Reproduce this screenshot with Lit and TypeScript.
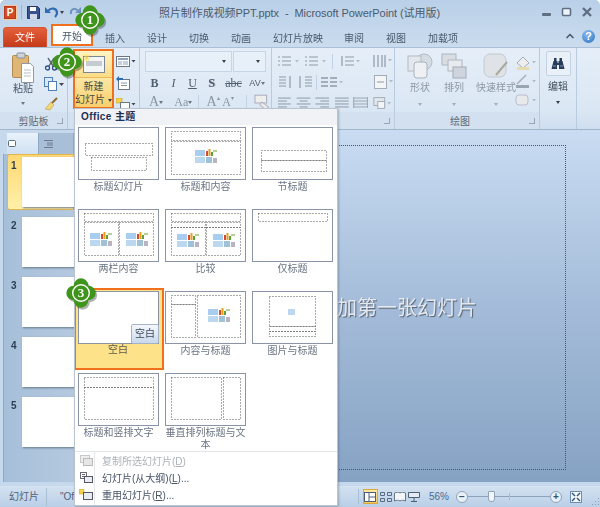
import { LitElement, html, css, svg } from 'lit'
import { customElement } from 'lit/decorators.js'

type Box = [number, number, number, number]

interface Layout {
  label: string
  boxes: Box[]
  icons?: [number, number][]
  selected?: boolean
}

// dashed placeholders inside each 81x53 thumbnail: x, y, w, h
const layouts: Layout[] = [
  { label: '标题幻灯片', boxes: [[7, 16, 67, 12], [13, 30, 55, 13]] },
  { label: '标题和内容', boxes: [[6, 4, 69, 9], [6, 14, 69, 33]], icons: [[29, 22]] },
  { label: '节标题', boxes: [[9, 23, 65, 10], [9, 33, 65, 11]] },
  { label: '两栏内容', boxes: [[6, 4, 69, 8], [6, 13, 34, 33], [41, 13, 34, 33]], icons: [[11, 23], [47, 23]] },
  { label: '比较', boxes: [[6, 4, 69, 8], [6, 13, 34, 5], [41, 13, 34, 5], [6, 18, 34, 28], [41, 18, 34, 28]], icons: [[11, 24], [47, 24]] },
  { label: '仅标题', boxes: [[6, 4, 69, 8]] },
  { label: '空白', boxes: [], selected: true },
  { label: '内容与标题', boxes: [[6, 4, 24, 9], [6, 13, 24, 33], [32, 4, 43, 42]], icons: [[42, 17]] },
  { label: '图片与标题', boxes: [[17, 5, 46, 30], [17, 35, 46, 5], [17, 40, 46, 5]] },
  { label: '标题和竖排文字', boxes: [[6, 4, 69, 10], [6, 14, 69, 32]] },
  { label: '垂直排列标题与文本', boxes: [[6, 4, 50, 42], [58, 4, 17, 42]] },
]

const tabs = [
  ['插入', 20], ['设计', 20], ['切换', 20], ['动画', 20], ['幻灯片放映', 49], ['审阅', 20], ['视图', 20], ['加载项', 30],
] as [string, number][]

const slideNumbers = [1, 2, 3, 4, 5]

// little picture/chart/table cluster used in the content placeholders
const contentIcon = svg`
  <rect x="0" y="0" width="10" height="6" fill="#a9cdee"/>
  <rect x="11" y="1" width="2" height="5" fill="#d9492c"/>
  <rect x="13.5" y="-1" width="2" height="7" fill="#e8a01e"/>
  <rect x="16" y="2" width="2" height="4" fill="#5aa03c"/>
  <path d="M18 1h4" stroke="#9bc36b" stroke-width="1.5"/>
  <rect x="0" y="7" width="10" height="6" fill="#bcd7f0"/>
  <rect x="11" y="7" width="6" height="6" fill="#9fc2d8"/>
  <rect x="18" y="8" width="4" height="5" fill="#b9b3c6"/>
`

const lobes = svg`
  <circle cx="15" cy="7.5" r="7.2"/><circle cx="22.500" cy="15" r="7.200"/><circle cx="15" cy="22.500" r="7.200"/><circle cx="7.500" cy="15" r="7.200"/><circle cx="15" cy="15" r="8"/>
`

const clover = svg`
  <g transform="translate(1.500 2)" fill="#000" opacity=".3">${lobes}</g>
  <g fill="#3f951c">${lobes}</g>
  <circle cx="15" cy="15" r="8.300" fill="none" stroke="#fff" stroke-width="1.400"/>
`

@customElement('app-root')
export class AppRoot extends LitElement {
  renderThumb(l: Layout) {
    return html`
      <div class="layout ${l.selected ? 'selected' : ''}">
        <div class="thumb">
          <svg width="79" height="51" viewBox="0 0 79 51">
            ${l.boxes.map(b => svg`<rect x=${b[0] - 0.5} y=${b[1] - 0.5} width=${b[2]} height=${b[3]} fill="none" stroke="#555" stroke-dasharray="1 2"/>`)}
            ${(l.icons || []).map(p => svg`<g transform="translate(${p[0]} ${p[1]})">${contentIcon}</g>`)}
            ${l.label === '图片与标题' ? svg`<rect x="35" y="17" width="7" height="6" fill="#bcd7f0"/>` : ''}
          </svg>
          ${l.selected ? html`<span class="tip">空白</span>` : ''}
        </div>
        <div class="cap">${l.label}</div>
      </div>
    `
  }

  renderMenu() {
    return html`
      <div class="menu">
        <div class="menu-head">Office 主题</div>
        <div class="grid">${layouts.map(l => this.renderThumb(l))}</div>
        <div class="menu-list">
          <div class="mi off">
            <svg width="14" height="12" viewBox="0 0 14 12"><rect x="1.5" y=".5" width="9" height="7" fill="#eee" stroke="#c8c8c8"/><rect x="4.5" y="3.5" width="9" height="7" fill="#e6e6e6" stroke="#bbb"/></svg>
            <span>复制所选幻灯片(<u>D</u>)</span>
          </div>
          <div class="mi">
            <svg width="14" height="12" viewBox="0 0 14 12"><rect x="1.5" y=".5" width="6" height="6" fill="#fff" stroke="#667"/><path d="M3 2.5h3M3 4.5h3" stroke="#667"/><rect x="5.5" y="4.5" width="8" height="6" fill="#e8edf2" stroke="#556"/></svg>
            <span>幻灯片(从大纲)(<u>L</u>)...</span>
          </div>
          <div class="mi">
            <svg width="14" height="12" viewBox="0 0 14 12"><rect x="0" y="0" width="5" height="5" fill="#f2d24a" stroke="#d8a520" stroke-width=".6"/><rect x="4.5" y="3.5" width="9" height="7" fill="#e8edf2" stroke="#556"/></svg>
            <span>重用幻灯片(<u>R</u>)...</span>
          </div>
        </div>
      </div>
    `
  }

  renderRibbon() {
    return html`
      <div class="ribbon">
        <section class="grp clip">
          <div class="body clip-body">
            <div class="paste">
              <svg width="22" height="32" viewBox="0 0 22 32">
                <rect x=".5" y="3.5" width="16" height="22" rx="1" fill="#e0b676" stroke="#b08a50"/>
                <rect x="5" y="1" width="8" height="5" rx="1" fill="#cfd3d8" stroke="#8a8f96"/>
                <path d="M9.5 11.5h9l3 3v16h-12z" fill="#fff" stroke="#8f9aa6"/>
                <path d="M12 18h7M12 21h7M12 24h7" stroke="#b7bfc8"/>
              </svg>
              <span>粘贴</span>
              <i class="caret"></i>
            </div>
            <div class="clip-tools">
              <svg width="14" height="14" viewBox="0 0 14 14"><path d="M4 1l5 8M10 1L5 9" stroke="#4d5968" stroke-width="1.4"/><circle cx="3.5" cy="11" r="2" fill="none" stroke="#2d4f86" stroke-width="1.3"/><circle cx="10.5" cy="11" r="2" fill="none" stroke="#2d4f86" stroke-width="1.3"/></svg>
              <svg width="20" height="14" viewBox="0 0 20 14"><rect x=".5" y=".5" width="8" height="9" fill="#dbe8f6" stroke="#4f7fb8"/><rect x="4.5" y="4.5" width="8" height="9" fill="#fff" stroke="#4f7fb8"/><path d="M15 6l2.500 3 2.500-3z" fill="#445"/></svg>
              <svg width="14" height="14" viewBox="0 0 14 14"><path d="M13 1L7 7" stroke="#8a6a35" stroke-width="2"/><path d="M7 5l3 3-4 5-5-1z" fill="#f1d67a" stroke="#b79a48" stroke-width=".6"/></svg>
            </div>
          </div>
          <div class="grp-label">剪贴板<i class="launch"></i></div>
        </section>
        <section class="grp slides">
          <div class="body slides-body">
            <div class="new-slide">
              <div class="ns-top">
                <svg width="22" height="18" viewBox="0 0 22 18"><rect x=".5" y=".5" width="21" height="16" fill="#f4f5f7" stroke="#7d8793"/><rect x="3" y="5" width="16" height="5" fill="#c6cbd2"/></svg>
              </div>
              <div class="ns-bot">新建<br />幻灯片 <i class="caret dark"></i></div>
            </div>
            <div class="ns-side">
              <svg width="20" height="12" viewBox="0 0 20 12"><rect x=".5" y=".5" width="13" height="10" fill="#fff" stroke="#6d7784"/><rect x="2" y="2" width="10" height="2" fill="#8ea3ba"/><rect x="2" y="5" width="4" height="4" fill="#c6d0dc"/><rect x="7" y="5" width="5" height="4" fill="#c6d0dc"/><path d="M15.500 4l2 2.500 2-2.500z" fill="#445"/></svg>
              <svg width="14" height="14" viewBox="0 0 14 14"><rect x="2.500" y="3.500" width="11" height="10" fill="#fff" stroke="#6d7784"/><path d="M5 7h6M5 9.500h6" stroke="#8a96a4"/><path d="M0 3l3-3v2h4v2H3v2z" fill="#2b6cb8"/></svg>
              <svg width="20" height="13" viewBox="0 0 20 13"><rect x="0" y="0" width="6" height="5" fill="#f2d24a" stroke="#c79a20" stroke-width=".6"/><rect x="4.500" y="4.500" width="9" height="8" fill="#fff" stroke="#6d7784"/><path d="M15.500 5l2 2.500 2-2.500z" fill="#445"/></svg>
            </div>
          </div>
          <div class="grp-label"></div>
        </section>
        <section class="grp font">
          <div class="body font-body">
            <div class="combos"><span class="combo wide"><i class="caret dark"></i></span><span class="combo narrow"><i class="caret dark"></i></span></div>
            <div class="font-row">
              <b class="fb">B</b><em class="fb">I</em><u class="fb">U</u><span class="fb s">S</span><span class="fb abc">abc</span><span class="fb av">AV<i class="caret"></i></span>
            </div>
            <div class="font-row lower">
              <span class="fa">A<i class="caret"></i></span><span class="fa sm">Aa<i class="caret"></i></span><span class="sep"></span><span class="fa up">A<sup>▴</sup></span><span class="fa sm">A<sup>▾</sup></span><span class="sep"></span>
              <svg width="18" height="16" viewBox="0 0 18 16"><rect x="1" y="1" width="12" height="8" fill="#eee" stroke="#aab"/><path d="M8 8l7 5-3 3-6-5z" fill="#e9e9e9" stroke="#aab"/></svg>
            </div>
          </div>
          <div class="grp-label"></div>
        </section>
        <section class="grp para">
          <div class="body para-body">
            <div class="para-row">
              <svg width="24" height="12" viewBox="0 0 24 12"><path d="M4 2h9M4 6h9M4 10h9M0 2h2M0 6h2M0 10h2" stroke="#8d99a6" stroke-width="1.200"/><path d="M17 5l2 2.500 2-2.500z" fill="#b3bcc6"/></svg>
              <svg width="24" height="12" viewBox="0 0 24 12"><path d="M4 2h9M4 6h9M4 10h9M0 2h2M0 6h2M0 10h2" stroke="#8d99a6" stroke-width="1.200"/><path d="M17 5l2 2.500 2-2.500z" fill="#b3bcc6"/></svg>
              <span class="sep"></span>
              <svg class="gap5" width="20" height="12" viewBox="0 0 20 12"><path d="M5 2h9M5 6h9M5 10h9M2 1v10" stroke="#8d99a6" stroke-width="1.200"/><path d="M16 5l2 2.500 2-2.500z" fill="#b3bcc6"/></svg>
              <svg class="gap9" width="20" height="14" viewBox="0 0 20 14"><path d="M2 1v12M6 1v12M10 1v12M13 1v12" stroke="#8d99a6" stroke-width="1.200"/><path d="M16 5l2 2.500 2-2.500z" fill="#b3bcc6"/></svg>
            </div>
            <div class="para-row r2">
              <svg width="16" height="14" viewBox="0 0 16 14"><path d="M1 2h7M1 5h7M1 8h7M1 11h7M12 1v12" stroke="#8d99a6" stroke-width="1.200"/></svg>
              <svg width="16" height="14" viewBox="0 0 16 14"><path d="M8 2h7M8 5h7M8 8h7M8 11h7M3 1v12" stroke="#8d99a6" stroke-width="1.200"/></svg>
              <span class="sep"></span>
              <svg width="24" height="12" viewBox="0 0 24 12"><path d="M1 2h7M1 6h7M1 10h7M10 2h7M10 6h7M10 10h7" stroke="#8d99a6" stroke-width="1.500"/><path d="M19 5l2 2.500 2-2.500z" fill="#b3bcc6"/></svg>
              <svg class="push" width="20" height="14" viewBox="0 0 20 14"><rect x=".5" y=".5" width="12" height="13" fill="#f3f5f7" stroke="#a3adb8"/><path d="M3 7h7" stroke="#8d99a6"/><path d="M15 5l2 2.500 2-2.500z" fill="#b3bcc6"/></svg>
            </div>
            <div class="para-row r3">
              <svg width="118" height="14" viewBox="0 0 118 14">
                <path d="M0 2h13M0 5h9M0 8h13M0 11h9M19 2h14M22 5h8M19 8h14M22 11h8M38 2h14M43 5h9M38 8h14M43 11h9M58 2h14M58 5h14M58 8h14M58 11h14" stroke="#8d99a6"/>
                <path d="M77 2h14M77 5h14M77 8h14M77 11h14M77 1v11M91 1v11" stroke="#9aa5b1"/>
                <rect x="97.500" y="1.500" width="11" height="8" fill="#e3e7eb" stroke="#a3adb8"/>
                <rect x="101.500" y="5.500" width="7" height="7" fill="#f3f5f7" stroke="#a3adb8"/>
                <path d="M111 6l2 2.500 2-2.500z" fill="#b3bcc6"/>
              </svg>
            </div>
          </div>
          <div class="grp-label"><i class="launch"></i></div>
        </section>
        <section class="grp draw">
          <div class="body draw-body">
            <div class="big">
              <svg width="26" height="26" viewBox="0 0 26 26"><circle cx="17" cy="9" r="8" fill="#d6dce3" stroke="#b2bac3"/><rect x="1" y="3" width="13" height="15" fill="#e4e8ec" stroke="#b2bac3"/><rect x="7" y="9" width="13" height="16" rx="3" fill="#eef0f3" stroke="#a9b2bc"/></svg>
              <span>形状</span><i class="caret light"></i>
            </div>
            <div class="big">
              <svg width="26" height="26" viewBox="0 0 26 26"><rect x="1" y="1" width="14" height="11" fill="#d9dde2" stroke="#aeb6bf"/><rect x="7" y="7" width="14" height="11" fill="#e8ebee" stroke="#aeb6bf"/><rect x="12" y="14" width="13" height="11" fill="#cfd5dc" stroke="#a3acb6"/></svg>
              <span>排列</span><i class="caret light"></i>
            </div>
            <div class="big wide">
              <svg width="26" height="26" viewBox="0 0 26 26"><rect x="1" y="1" width="22" height="23" rx="6" fill="#dfe2e6" stroke="#c3c8ce"/><path d="M13 22L24 9" stroke="#a9a9a0" stroke-width="2"/></svg>
              <span>快速样式</span><i class="caret light"></i>
            </div>
            <div class="draw-side">
              <svg width="22" height="15" viewBox="0 0 22 15"><path d="M2 8l6-6 6 6-6 5z" fill="#eee" stroke="#aab"/><rect x="2" y="12" width="12" height="3" fill="#e4dcae"/><path d="M17 6l2 2.500 2-2.500z" fill="#b3bcc6"/></svg>
              <svg width="22" height="15" viewBox="0 0 22 15"><path d="M2 10L11 1" stroke="#aab" stroke-width="1.500"/><rect x="1" y="11" width="13" height="3" fill="#9aa5b2"/><path d="M17 6l2 2.500 2-2.500z" fill="#b3bcc6"/></svg>
              <svg width="22" height="15" viewBox="0 0 22 15"><rect x="1" y="2" width="12" height="10" rx="3" fill="#e8e9ea" stroke="#bbc"/><path d="M17 6l2 2.500 2-2.500z" fill="#b3bcc6"/></svg>
            </div>
          </div>
          <div class="grp-label draw-label">绘图<i class="launch"></i></div>
        </section>
        <section class="grp edit">
          <div class="body edit-body">
            <div class="binoc">
              <svg width="14" height="13" viewBox="0 0 14 13"><path d="M3 1h2.500v3H3zM8.500 1H11v3H8.500zM2.500 4h4v2h1V4h4l2 8H8V8H6v4H.5z" fill="#273b5c"/><path d="M2 9h3M9 9h3" stroke="#7e95b5"/></svg>
            </div>
            <span>编辑</span><i class="caret dark"></i>
          </div>
        </section>
      </div>
    `
  }

  render() {
    return html`
      <div class="win">
        <header class="title">
          <span class="logo">P</span>
          <span class="qsep"></span>
          <svg width="13" height="13" viewBox="0 0 13 13"><path d="M.5.500h10l2 2v10H.5z" fill="#38518f" stroke="#24376b"/><rect x="3" y="1" width="6" height="4" fill="#fff"/><rect x="3" y="8" width="7" height="5" fill="#cfd8e8"/></svg>
          <svg width="14" height="12" viewBox="0 0 14 12"><path d="M3 5c3-4 9-3 9 2 0 2-1 3-2 4" fill="none" stroke="#2f6ab0" stroke-width="2.200"/><path d="M0 1v6h6z" fill="#2f6ab0"/></svg>
          <i class="caret dark undo-caret"></i>
          <svg width="12" height="12" viewBox="0 0 12 12"><path d="M9 5C6 1 1 3 2 8" fill="none" stroke="#6f94c0" stroke-width="2"/><path d="M12 1v6H6z" fill="#6f94c0"/></svg>
          <span class="doc">照片制作成视频PPT.pptx  -  Microsoft PowerPoint (试用版)</span>
          <span class="winbtns">
            <svg width="12" height="10" viewBox="0 0 12 10"><rect x="1" y="6" width="9" height="3" rx="1" fill="#5f6f82"/></svg>
            <svg width="12" height="10" viewBox="0 0 12 10"><rect x="1.500" y="1.500" width="8" height="7" rx="1" fill="#eef3f9" stroke="#5f6f82" stroke-width="1.600"/></svg>
            <svg width="12" height="10" viewBox="0 0 12 10"><path d="M2 1l8 8M10 1L2 9" stroke="#5f6f82" stroke-width="2.400"/></svg>
          </span>
        </header>
        <nav class="tabs">
          <span class="file">文件</span>
          <span class="tab home">开始</span>
          ${tabs.map(t => html`<span class="tab" style="width:${t[1]}px">${t[0]}</span>`)}
          <span class="tab-end">
            <svg width="8" height="6" viewBox="0 0 8 6"><path d="M.5 5L4 1.500 7.500 5" fill="none" stroke="#445566" stroke-width="1.500"/></svg>
            <span class="help">?</span>
          </span>
        </nav>
        ${this.renderRibbon()}
        <main class="work">
          <aside class="panel">
            <div class="panel-tabs">
              <span class="pt active"><svg width="9" height="8" viewBox="0 0 9 8"><rect x=".5" y=".5" width="7" height="6" rx="1" fill="#fff" stroke="#5d6c7d"/></svg></span>
              <span class="pt"><svg width="9" height="8" viewBox="0 0 9 8"><path d="M0 .5h9M3 3h6M3 5h6M0 7.500h9" stroke="#6d7b8c"/></svg></span>
            </div>
            <div class="slide-list">
              ${slideNumbers.map(n => html`
                <div class="sl ${n === 1 ? 'cur' : ''}"><b>${n}</b><span class="sheet"></span></div>
              `)}
            </div>
          </aside>
          <div class="stage">
            <div class="canvas"><span class="hint">单击此处添加第一张幻灯片</span></div>
          </div>
        </main>
        <footer class="status">
          <span class="st first">幻灯片</span>
          <span class="st office">"Office 主题"</span>
          <span class="spacer"></span>
          <span class="views">
            <span class="vb on"><svg width="12" height="10" viewBox="0 0 12 10"><rect x=".5" y=".5" width="11" height="9" fill="#fff" stroke="#4d5f77"/><path d="M5 0v10M5 5h7" stroke="#4d5f77"/></svg></span>
            <span class="vb"><svg width="12" height="10" viewBox="0 0 12 10"><path d="M.5.500h4v3h-4zM7.500.500h4v3h-4zM.5 6.500h4v3h-4zM7.500 6.500h4v3h-4z" fill="none" stroke="#5a6c84"/></svg></span>
            <span class="vb"><svg width="12" height="10" viewBox="0 0 12 10"><path d="M.5 1c2-1 4-1 5.500 0 1.500-1 3.500-1 5.500 0v8C9.500 8 7.500 8 6 9 4.500 8 2.500 8 .5 9z" fill="#f4f7fa" stroke="#66788f"/></svg></span>
            <span class="vb"><svg width="12" height="10" viewBox="0 0 12 10"><path d="M.5.500h11v5H.5z" fill="#e4ebf3" stroke="#4d5f77"/><path d="M6 6v3M3 9.500h6" stroke="#4d5f77"/></svg></span>
          </span>
          <span class="pct">56%</span>
          <span class="rnd">−</span>
          <span class="slider"><i class="thumbk"></i><i class="mid"></i></span>
          <span class="rnd">+</span>
          <span class="fit"><svg width="12" height="12" viewBox="0 0 12 12"><rect x=".5" y=".5" width="11" height="11" fill="#f4f7fb" stroke="#6c8cb5"/><path d="M2 2l3 3M10 2L7 5M2 10l3-3M10 10L7 7" stroke="#2d4f86" stroke-width="1.400"/></svg></span>
          <svg class="grip" width="10" height="10" viewBox="0 0 10 10"><path d="M8 1h1v1H8zM5 4h1v1H5zM8 4h1v1H8zM2 7h1v1H2zM5 7h1v1H5zM8 7h1v1H8z" fill="#8ea3ba"/></svg>
        </footer>
        ${this.renderMenu()}
        <span class="badge b1"><svg width="32" height="32" viewBox="0 0 32 32">${clover}</svg><b>1</b></span>
        <span class="badge b2"><svg width="32" height="32" viewBox="0 0 32 32">${clover}</svg><b>2</b></span>
        <span class="badge b3"><svg width="32" height="32" viewBox="0 0 32 32">${clover}</svg><b>3</b></span>
        <span class="spark">✳</span>
      </div>
    `
  }

  static styles = css`
    :host {
      display: block;
      width: 600px;
      height: 507px;
      overflow: hidden;
      font-family: 'Liberation Sans', 'Noto Sans CJK SC', sans-serif;
      font-size: 10px;
      color: #3d4b5c;
    }

    * { box-sizing: border-box; }

    .win {
      position: relative;
      width: 600px;
      height: 507px;
      display: flex;
      flex-direction: column;
      background: linear-gradient(#b9d0e8, #cbdcee 47px);
      border-radius: 5px 5px 0 0;
      overflow: hidden;
      filter: blur(.3px);
    }

    .caret {
      display: inline-block;
      width: 0;
      height: 0;
      border: 2.500px solid transparent;
      border-top: 3px solid #6b7885;
      border-bottom: 0;
      vertical-align: middle;
    }
    .caret.dark { border-top-color: #3a3f47; }
    .caret.light { border-top-color: #a4adb7; }

    .launch {
      display: inline-block;
      width: 6px;
      height: 6px;
      border: 1px solid #97a5b4;
      border-width: 0 1px 1px 0;
    }

    /* title bar */
    .title {
      height: 24px;
      flex: none;
      display: flex;
      align-items: center;
      padding: 0 7px 0 4px;
      gap: 5px;
    }
    .logo {
      width: 12px;
      height: 13px;
      background: #d24a26;
      border: 1px solid #b53a1c;
      outline: 1px solid #f4c9a6;
      color: #fff;
      font: bold 10px/11px 'Liberation Sans', sans-serif;
      text-align: center;
    }
    .qsep { width: 1px; height: 14px; background: #9fb4ca; }
    .undo-caret { margin-left: -4px; }
    .doc {
      margin-left: 73px;
      font-size: 11px;
      letter-spacing: -.07px;
      white-space: pre;
      color: #4c5a6c;
    }
    .winbtns { margin-left: auto; display: flex; gap: 8px; }

    /* tabs */
    .tabs {
      height: 24px;
      flex: none;
      display: flex;
      align-items: center;
      padding: 0 5px 0 3px;
    }
    .file {
      width: 44px;
      height: 21px;
      margin-top: 3px;
      background: linear-gradient(#e5603c, #c43a1a);
      border: 1px solid #d8542c;
      border-radius: 3px 3px 0 0;
      color: #fff;
      text-align: center;
      line-height: 19px;
    }
    .tab { color: #48586b; text-align: center; margin: 2px 22px 0 0; flex: none; white-space: nowrap; }
    .tab.home {
      width: 42px;
      height: 22px;
      margin: -2px 12px 0 4px;
      line-height: 22px;
      background: #fff;
      border: 2px solid #f0701e;
    }
    .tab-end { margin-left: auto; display: flex; align-items: center; gap: 8px; }
    .help {
      width: 13px;
      height: 13px;
      border-radius: 50%;
      background: radial-gradient(circle at 40% 30%, #8ebdf0, #2a6fc0);
      color: #fff;
      font: bold 11px/13px 'Liberation Sans', sans-serif;
      text-align: center;
    }

    /* ribbon */
    .ribbon {
      height: 83px;
      flex: none;
      display: flex;
      background: linear-gradient(#e5eef8, #dbe7f4 60px, #cfdeef);
      border-top: 1px solid #a9c0d8;
      border-bottom: 1px solid #9fb5cb;
      margin: -1px 0 0;
    }
    .grp {
      display: flex;
      flex-direction: column;
      border-right: 1px solid #b8cbdf;
      flex: none;
    }
    .body { flex: 1; min-height: 0; }
    .grp-label {
      height: 17px;
      flex: none;
      text-align: center;
      position: relative;
      line-height: 19px;
      color: #5a6a7c;
      background: #d2e0ef;
    }
    .grp-label .launch { position: absolute; right: 4px; top: 6px; }

    .clip { width: 68px; }
    .clip-body { display: flex; padding: 4px 0 0 11px; gap: 9px; }
    .paste { display: flex; flex-direction: column; align-items: center; width: 24px; color: #4a5869; }
    .paste span { line-height: 14px; margin-top: -2px; }
    .paste .caret { margin-top: 6px; }
    .clip-tools { display: flex; flex-direction: column; gap: 6px; padding-top: 5px; }

    .slides { width: 72px; }
    .slides-body { display: flex; padding: 1px 0 0 5px; }
    .new-slide {
      width: 41px;
      height: 60px;
      border: 2px solid #f0701e;
      display: flex;
      flex-direction: column;
    }
    .ns-top {
      height: 27px;
      flex: none;
      background: linear-gradient(#fdf3c4, #fbdc86);
      padding: 5px 0 0 8px;
      border-bottom: 1px solid #e7b95a;
    }
    .ns-bot {
      flex: 1;
      background: linear-gradient(#fce7a4, #f9cf6c);
      text-align: center;
      line-height: 13px;
      padding-top: 2px;
      color: #4a4a3a;
      white-space: nowrap;
    }
    .ns-side { display: flex; flex-direction: column; gap: 8px; padding: 7px 0 0 2px; }

    .font { width: 132px; }
    .font-body { padding: 3px 0 0 5px; }
    .combos { display: flex; height: 21px; gap: 1px; }
    .combo {
      height: 21px;
      background: #e7eff8;
      border: 1px solid #c6d6e6;
      display: flex;
      align-items: center;
      justify-content: flex-end;
      padding-right: 5px;
    }
    .combo.wide { width: 87px; }
    .combo.narrow { width: 33px; }
    .font-row { display: flex; align-items: center; height: 18px; margin-top: 2px; color: #4f5e70; }
    .fb { font: 12px 'Liberation Serif', serif; font-style: normal; width: 19px; text-align: center; flex: none; }
    b.fb { font-weight: bold; }
    em.fb { font-style: italic; }
    .fb.s { font-weight: bold; text-shadow: 1px 0 #aab; }
    .fb.abc { text-decoration: line-through; width: 25px; }
    .fb.av { font: 9px 'Liberation Sans', sans-serif; width: 22px; white-space: nowrap; }
    .font-row.lower { margin-top: 1px; padding-left: 4px; }
    .fa { font: 14px 'Liberation Serif', serif; color: #8895a3; white-space: nowrap; }
    .fa:first-child { width: 26px; }
    .fa.sm { font-size: 12px; width: 24px; }
    .fa.up { width: 16px; margin-left: 8px; }
    .fa sup { font-size: 6px; vertical-align: 6px; line-height: 0; }
    .sep { width: 1px; height: 15px; background: #c3d2e2; flex: none; }
    .font-row.lower svg { margin-left: 7px; }

    .para { width: 123px; }
    .para-body { padding: 5px 0 0 6px; }
    .para-row { display: flex; align-items: center; height: 16px; gap: 3px; }
    .para-row .gap5 { margin-left: 4px; }
    .para-row .gap9 { margin-left: 9px; }
    .para-row.r2 { margin-top: 5px; }
    .para-row.r3 { margin-top: 5px; }
    .para-row.r2 .push { margin-left: 27px; }

    .draw { width: 145px; }
    .draw-body { display: flex; padding: 5px 0 0 9px; color: #8d98a5; }
    .big { display: flex; flex-direction: column; align-items: center; width: 32px; margin-right: 2px; }
    .big.wide { width: 42px; margin-right: 0; margin-left: 3px; }
    .big span { line-height: 14px; margin-top: 2px; white-space: nowrap; }
    .big .caret { margin-top: 8px; }
    .draw-side { display: flex; flex-direction: column; gap: 4px; margin-left: -2px; padding-top: 2px; }
    .draw-label { padding-right: 14px; }

    .edit { width: 37px; }
    .edit-body {
      display: flex;
      flex-direction: column;
      align-items: center;
      padding-top: 3px;
      color: #43515f;
    }
    .binoc {
      width: 25px;
      height: 25px;
      border: 1px solid #c3d2e2;
      border-radius: 2px;
      background: #e9f0f8;
      display: flex;
      align-items: center;
      justify-content: center;
      margin-bottom: 3px;
    }
    .edit-body span { line-height: 15px; }
    .edit-body .caret { margin-top: 7px; }

    /* work area */
    .work { flex: 1; min-height: 0; display: flex; }
    .panel {
      width: 74px;
      flex: none;
      background: #c5d8ec;
      padding-left: 3px;
      overflow: hidden;
    }
    .panel-tabs { display: flex; height: 24px; padding: 3px 0 0 4px; }
    .pt {
      display: flex;
      align-items: center;
      padding-left: 5px;
      flex: 1;
      background: #a8bfd7;
      border-right: 1px solid #8fa9c3;
    }
    .pt.active { background: linear-gradient(#e9f2fb, #cfe0f1); flex: none; width: 32px; padding-left: 1px; }
    .slide-list {
      padding: 0 0 0 3px;
      display: flex;
      flex-direction: column;
      gap: 4px;
      background: linear-gradient(90deg, #a6bfd9, #b4c9df);
      height: 340px;
      border-left: 1px solid #8fa9c3;
    }
    .sl {
      height: 56px;
      position: relative;
      padding: 5px 0 0 3px;
      display: flex;
      border: 1px solid transparent;
      font: bold 10px 'Liberation Sans', sans-serif;
      color: #2d3e54;
    }
    .sl b { width: 12px; }
    .sl.cur {
      background: linear-gradient(#ffd875, #fff0a8);
      border-radius: 3px 0 0 3px;
      border-color: #e6b64c;
    }
    .sheet { position: absolute; left: 14px; top: 2px; width: 60px; height: 50px; background: #fff; box-shadow: 1px 1px 2px #66788c; }

    .stage {
      flex: 1;
      padding: 15px 34px 12px 0;
      background: linear-gradient(#c9dcf2, #a4bcd9 50%, #86a2c3);
    }
    .canvas {
      height: 100%;
      border: 1px dotted #555;
      border-left: 0;
      position: relative;
    }
    .hint {
      position: absolute;
      right: 88px;
      top: 149px;
      font-size: 20px;
      line-height: 26px;
      color: #e4e9f1;
      text-shadow: 1px 1px 1px #55606e;
      white-space: nowrap;
    }

    /* status bar */
    .status {
      height: 25px;
      flex: none;
      display: flex;
      align-items: center;
      position: relative;
      background: linear-gradient(#d4e2f1, #b9cfe6);
      border-top: 4px solid #c5d8ec;
      color: #50607a;
      padding-right: 17px;
    }
    .st { padding: 0 8px; white-space: nowrap; line-height: 18px; }
    .st.first { width: 47px; padding-left: 9px; border-right: 1px solid #a9bfd6; }
    /* the gallery hides all but the start of this label */
    .st.office { width: 27px; padding: 0 0 0 13px; overflow: hidden; flex: none; }
    .spacer { flex: 1; }
    .views { display: flex; align-items: center; border-left: 1px solid #a9bfd6; padding-left: 4px; }
    .vb { width: 14px; height: 15px; display: flex; align-items: center; justify-content: center; }
    .vb.on { width: 15px; margin-right: 1px; background: linear-gradient(#fde9a8, #f8c95e); border: 1px solid #dba83c; }
    .pct { margin: 0 7px 0 8px; font: 10px 'Liberation Sans', sans-serif; color: #4c6a90; }
    .rnd {
      width: 12px;
      height: 12px;
      border-radius: 50%;
      background: #e9f0f8;
      border: 1px solid #8ea3ba;
      font: bold 10px/9px 'Liberation Sans', sans-serif;
      text-align: center;
      color: #40526a;
      flex: none;
    }
    .slider { width: 82px; height: 1px; background: #8ea3ba; position: relative; }
    .thumbk {
      position: absolute;
      left: 20px;
      top: -5px;
      width: 7px;
      height: 11px;
      background: #f2f6fa;
      border: 1px solid #8ea3ba;
      border-radius: 1px 1px 3px 3px;
    }
    .mid { position: absolute; left: 41px; top: -3px; width: 1px; height: 7px; background: #a9bbd0; }
    .fit { margin-left: 7px; width: 14px; height: 14px; display: flex; align-items: center; justify-content: center; }
    .grip { position: absolute; right: 0; bottom: 0; }

    /* new slide gallery, drops over the ribbon and the work area */
    .menu {
      position: absolute;
      left: 74px;
      top: 108px;
      width: 264px;
      height: 398px;
      background: #fff;
      border: 1px solid #b9c4d0;
      box-shadow: 1px 1px 2px rgba(60, 80, 100, .35);
      display: flex;
      flex-direction: column;
    }
    .menu-head {
      height: 16px;
      flex: none;
      background: #f0f2f5;
      font: bold 10px/16px 'Liberation Sans', 'Noto Sans CJK SC', sans-serif;
      letter-spacing: .4px;
      color: #1f2f4f;
      padding-left: 6px;
    }
    .grid {
      display: grid;
      grid-template-columns: repeat(3, 87px);
      grid-auto-rows: 82px;
      padding: 2px 0 0 3px;
      height: 326px;
      flex: none;
      overflow: hidden;
    }
    .layout { width: 81px; }
    .layout.selected {
      width: 90px;
      height: 82px;
      margin: -3px 0 0 -4px;
      background: #fde28a;
      border: 2px solid #f0701e;
      padding: 1px 0 0 2px;
    }
    .thumb {
      position: relative;
      width: 81px;
      height: 53px;
      border: 1px solid #8b93a8;
      background: #fff;
    }
    .tip {
      position: absolute;
      right: -1px;
      bottom: -1px;
      width: 28px;
      height: 20px;
      background: linear-gradient(#f5f8fc, #c9d8ea);
      border: 1px solid #a4b4c8;
      border-radius: 2px;
      text-align: center;
      line-height: 18px;
      color: #3c4a5c;
    }
    .cap {
      text-align: center;
      line-height: 12px;
      padding-top: 1px;
      color: #6a7482;
      width: 81px;
    }
    .layout.selected .cap { width: 80px; padding-top: 0; color: #5a5a48; }
    .menu-list { flex: 1; border-top: 1px solid #e3e6ea; position: relative; }
    .menu-list::before {
      content: '';
      position: absolute;
      left: 19px;
      top: 0;
      bottom: 0;
      width: 1px;
      background: #e6e8eb;
    }
    .mi {
      height: 17px;
      display: flex;
      align-items: center;
      padding-left: 4px;
      gap: 9px;
      color: #47546a;
    }
    .mi.off { color: #aeb2b8; }

    /* numbered markers added on top of the screenshot */
    .badge {
      position: absolute;
      width: 32px;
      height: 32px;
      display: flex;
      align-items: center;
      justify-content: center;
      color: #fff;
      font: bold 13px 'Liberation Serif', serif;
    }
    .badge svg { position: absolute; left: 0; top: 0; }
    .badge b { position: relative; left: -1px; top: -1px; }
    .b1 { left: 75px; top: 5px; }
    .b2 { left: 52px; top: 47px; }
    .b3 { left: 66px; top: 278px; }
    .spark { position: absolute; left: 82px; top: 52px; color: #f6d742; font-size: 11px; line-height: 12px; }
  `
}
